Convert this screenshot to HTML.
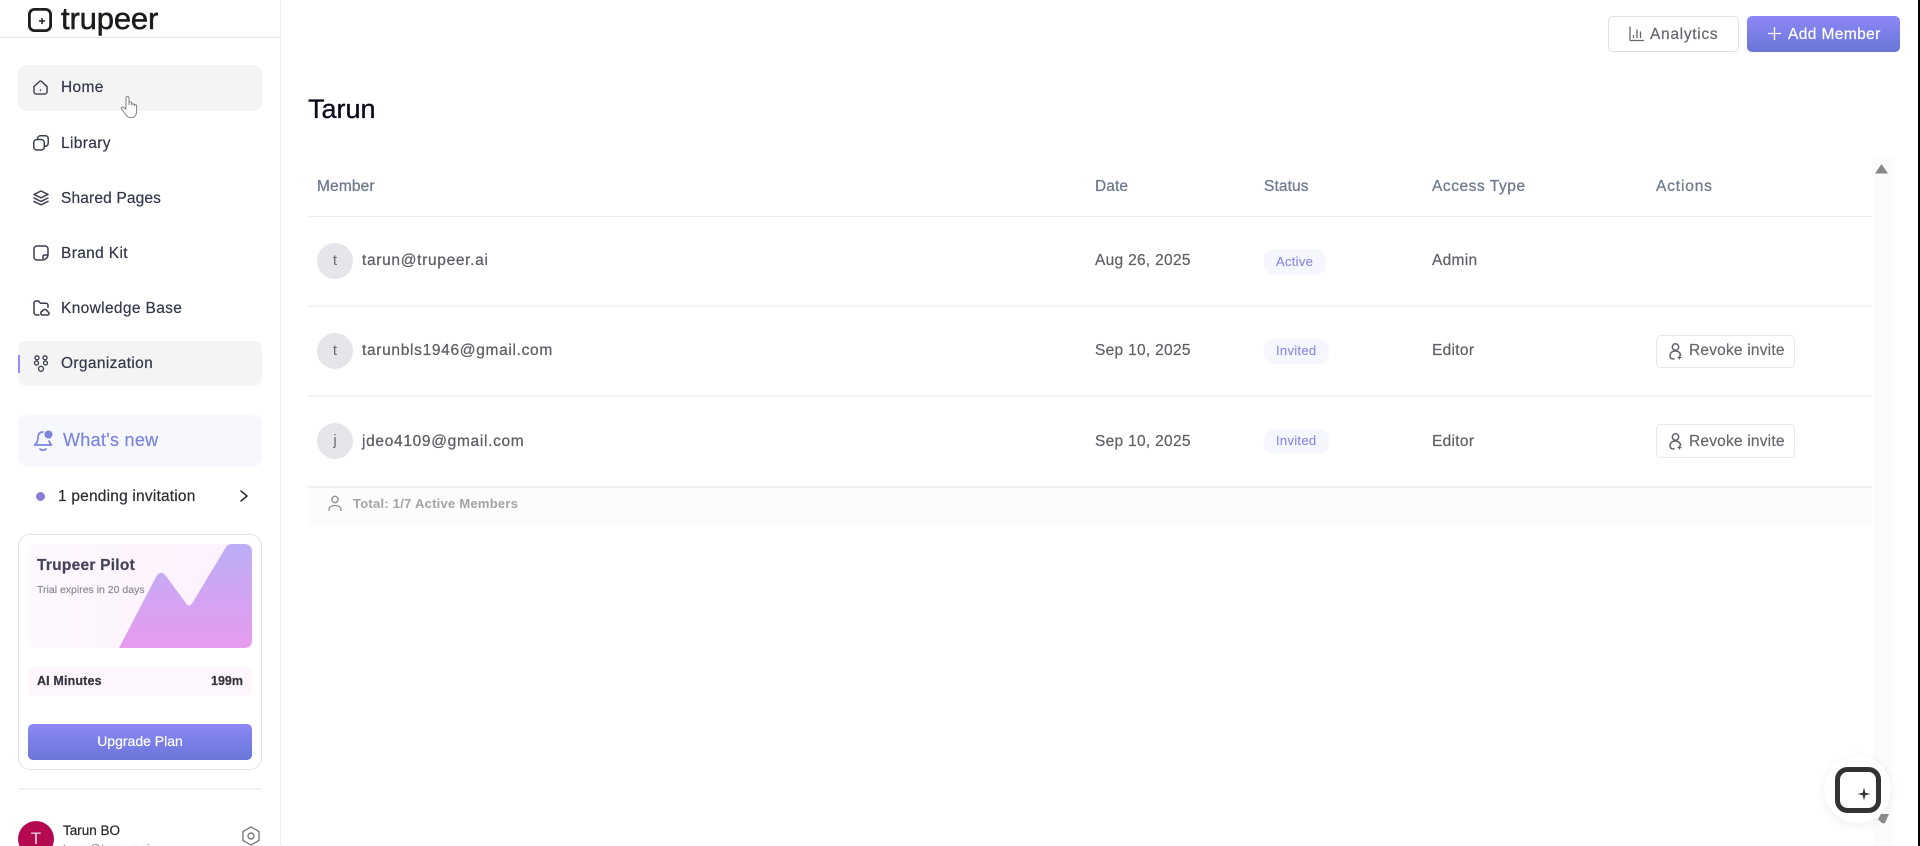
<!DOCTYPE html>
<html lang="en"><head><meta charset="utf-8"><title>Trupeer</title>
<style>
html,body{margin:0;padding:0;background:#fff;width:1920px;height:846px;overflow:hidden}
body{position:relative;font-family:"Liberation Sans",sans-serif;color:#333}
#r{position:absolute;left:0;top:0;width:1920px;height:846px;filter:blur(.35px);overflow:hidden}
.t{position:absolute;white-space:nowrap;line-height:20px;height:20px;-webkit-text-stroke:.2px}
.b{position:absolute;box-sizing:border-box}
svg{position:absolute;overflow:visible}
.nav{font-size:15.5px;color:#33384a;left:61px;letter-spacing:.35px}
.ic{fill:none;stroke:#3a3f4c;stroke-width:1.5;stroke-linecap:round;stroke-linejoin:round}
.th{font-size:15.5px;color:#6f7b8f;letter-spacing:.35px;top:177px;-webkit-text-stroke:.3px}
.td{font-size:15.5px;color:#5e5e66;letter-spacing:.3px}
.em{font-size:15.5px;color:#5e5e66;letter-spacing:.68px;left:362px;-webkit-text-stroke:.25px}
.av{background:#e6e6ea;border-radius:50%;width:36px;height:36px;left:317px;text-align:center;line-height:36px;font-size:15px;color:#6a6a70}
.badge{background:#f6f6fe;border-radius:10px;color:#8c8ce0;font-size:13px;line-height:24px;padding-left:12px;left:1264px;letter-spacing:.3px;-webkit-text-stroke:.15px}
.rev{left:1656px;width:139px;height:33px;border:1px solid #e8e8ea;border-radius:5px;background:#fff}
.line{left:308px;width:1564px;height:2px;background:#f4f4f6}
</style></head><body><div id="r">

<div class="b" style="left:280px;top:0;width:1px;height:846px;background:#ececec"></div>
<div class="b" style="left:0;top:37px;width:280px;height:1px;background:#e4e4e4"></div>

<svg style="left:28px;top:8px" width="24" height="24" viewBox="0 0 24 24"><rect x="1.4" y="1.4" width="21.2" height="21.2" rx="5" fill="none" stroke="#1e1e22" stroke-width="2.8"/><path d="M14 10v6M11 13h6" stroke="#1e1e22" stroke-width="1.5"/></svg>
<div class="t" style="left:61px;top:1px;height:36px;line-height:36px;font-size:31px;color:#1c1c20;letter-spacing:-.15px;-webkit-text-stroke:.5px">trupeer</div>

<div class="b" style="left:18px;top:65px;width:244px;height:46px;background:#f4f4f5;border-radius:8px"></div>
<div class="b" style="left:18px;top:341px;width:244px;height:45px;background:#f4f4f5;border-radius:8px"></div>
<div class="b" style="left:18px;top:355px;width:2px;height:18px;background:#9a8cf5"></div>

<svg class="ic" style="left:33px;top:80px" width="15" height="15" viewBox="0 0 16 16"><path d="M1 7 6.700 1.700a2 2 0 0 1 2.600 0L15 7v5.500a2.500 2.500 0 0 1-2.500 2.500h-9A2.500 2.500 0 0 1 1 12.500z"/><path d="M8 10.600v.3"/></svg>
<div class="t nav" style="top:78px">Home</div>
<svg class="ic" style="left:33px;top:135px" width="16" height="16" viewBox="0 0 16 16"><rect x=".8" y="4.500" width="10.500" height="10.500" rx="3"/><path d="M4.600 4.400V3.600A2.800 2.800 0 0 1 7.400.8h5a2.800 2.800 0 0 1 2.800 2.800v4.600a3 3 0 0 1-3.800 2.900"/></svg>
<div class="t nav" style="top:134px">Library</div>
<svg class="ic" style="left:33px;top:190px" width="16" height="16" viewBox="0 0 16 16"><path d="M8 1l7 3.400-7 3.400-7-3.400zM1 8l7 3.400L15 8M1 11.400l7 3.400 7-3.400"/></svg>
<div class="t nav" style="top:189px;letter-spacing:.15px">Shared Pages</div>
<svg class="ic" style="left:33px;top:245px" width="16" height="16" viewBox="0 0 16 16"><path d="M8.500 15H4a3 3 0 0 1-3-3V4a3 3 0 0 1 3-3h8a3 3 0 0 1 3 3v5"/><path d="M10 15c2-.3 4.600-2 5-5h-3.500a1.500 1.500 0 0 0-1.500 1.500z"/></svg>
<div class="t nav" style="top:244px">Brand Kit</div>
<svg class="ic" style="left:33px;top:300px" width="16" height="16" viewBox="0 0 16 16"><path d="M6 15H3.500A2.500 2.500 0 0 1 1 12.500V3a2 2 0 0 1 2-2h2.500l2 2.200H13a2 2 0 0 1 2 2v2"/><path d="M9 15a2 2 0 0 1 .4-3.800 2.600 2.600 0 0 1 5 .4 1.800 1.800 0 0 1 .6 3.400z"/></svg>
<div class="t nav" style="top:299px">Knowledge Base</div>
<svg class="ic" style="left:33px;top:355px;stroke-width:1.3" width="16" height="17" viewBox="0 0 16 17"><circle cx="4" cy="2.800" r="2"/><circle cx="12" cy="2.800" r="2"/><circle cx="8" cy="13.800" r="2.500"/><circle cx="3.500" cy="8" r="2"/><circle cx="12.500" cy="8" r="2"/></svg>
<div class="t nav" style="top:354px">Organization</div>

<div class="b" style="left:18px;top:414px;width:244px;height:53px;background:#f7f7fe;border-radius:10px"></div>
<svg style="left:33px;top:429px" width="22" height="24" viewBox="0 0 22 24"><path d="M10 3C6 3 5 6 5 9c0 3-1.500 5.500-3.500 7h17c-1-1-2-2.200-2.500-4M7 20c1 1.500 5 1.500 6 0" fill="none" stroke="#7b85dc" stroke-width="1.700" stroke-linecap="round" stroke-linejoin="round"/><circle cx="15.500" cy="5.500" r="4" fill="#7b85dc"/></svg>
<div class="t" style="left:63px;top:430px;font-size:18px;color:#7b85dc;letter-spacing:.3px">What's new</div>

<div class="b" style="left:36px;top:492px;width:9px;height:9px;border-radius:50%;background:#8a7dd8"></div>
<div class="t" style="left:58px;top:487px;font-size:15.5px;color:#2c2c34;letter-spacing:.2px">1 pending invitation</div>
<svg style="left:239px;top:489px" width="10" height="14" viewBox="0 0 10 14"><path d="M2 2l6 5-6 5" fill="none" stroke="#333" stroke-width="1.600" stroke-linecap="round" stroke-linejoin="round"/></svg>

<div class="b" style="left:18px;top:534px;width:244px;height:236px;border:1px solid #e4e4e6;border-radius:12px;background:#fff"></div>
<div class="b" style="left:28px;top:544px;width:224px;height:104px;border-radius:8px;background:linear-gradient(90deg,#fdf8fe,#fdf0fd)"></div>
<svg style="left:28px;top:544px" width="224" height="104" viewBox="0 0 224 104"><defs><linearGradient id="mg" x1="0" y1="0" x2="0" y2="1"><stop offset="0" stop-color="#bcaef6"/><stop offset="1" stop-color="#e69bee"/></linearGradient></defs><path d="M91 104L128 33Q132.500 25 138 32L157 58Q161 65 165 58L198 3Q200 0 204 0H216Q224 0 224 8V96Q224 104 216 104Z" fill="url(#mg)"/></svg>
<div class="t" style="left:37px;top:555px;top:556px;font-size:15.5px;font-weight:bold;color:#45435a;letter-spacing:.25px">Trupeer Pilot</div>
<div class="t" style="left:37px;top:580px;font-size:10.5px;color:#8e8c9c;letter-spacing:0">Trial expires in 20 days</div>
<div class="b" style="left:28px;top:667px;width:224px;height:29px;border-radius:6px;background:#fdf6fd"></div>
<div class="t" style="left:37px;top:671px;font-size:12.500px;font-weight:bold;color:#34343f;letter-spacing:.15px">AI Minutes</div>
<div class="t" style="left:211px;top:671px;font-size:12.500px;font-weight:bold;color:#34343f">199m</div>
<div class="b" style="left:28px;top:724px;width:224px;height:36px;border-radius:5px;background:linear-gradient(180deg,#8c87f6,#6976d8)"></div>
<div class="t" style="left:28px;width:224px;text-align:center;top:731px;font-size:14px;color:#fff;letter-spacing:0">Upgrade Plan</div>

<div class="b" style="left:18px;top:788px;width:244px;height:2px;background:#f3f3f3"></div>
<div class="b" style="left:18px;top:821px;width:36px;height:36px;border-radius:50%;background:#b30a52;color:#f6d5e2;text-align:center;line-height:36px;font-size:17px">T</div>
<div class="t" style="left:63px;top:821px;font-size:13.500px;color:#25252c">Tarun BO</div>
<div class="t" style="left:63px;top:839px;font-size:11px;color:#8a8a92;letter-spacing:.3px">tarun@trupeer.ai</div>
<svg style="left:241px;top:826px" width="20" height="20" viewBox="0 0 20 20"><path d="M10 1l8 4.500v9L10 19l-8-4.500v-9z" fill="none" stroke="#7c7c82" stroke-width="1.400" stroke-linejoin="round"/><circle cx="10" cy="10" r="3" fill="none" stroke="#7c7c82" stroke-width="1.400"/></svg>

<svg style="left:120px;top:95px" width="18" height="24" viewBox="0 0 18 24"><path d="M6 14V3a1.500 1.500 0 0 1 3 0v7l0-2a1.300 1.300 0 0 1 2.600 0v2a1.300 1.300 0 0 1 2.600 0v1a1.200 1.200 0 0 1 2.400 0v5c0 4-2 6.500-5.500 6.500-3 0-4.500-1-6-4L1.500 14c-.7-1.500 1.200-2.500 2.300-1.300z" fill="#fff" stroke="#808086" stroke-width="1"/></svg>

<div class="b" style="left:1608px;top:16px;width:131px;height:36px;border:1px solid #e2e2e5;border-radius:5px;background:#fff"></div>
<svg style="left:1629px;top:27px" width="15" height="15" viewBox="0 0 15 15"><path d="M1 0v12.500a1 1 0 0 0 1 1h12.500M4.500 8.500v2M8 3v7.500M11.500 5v5.500" fill="none" stroke="#66666c" stroke-width="1.300" stroke-linecap="round"/></svg>
<div class="t" style="left:1650px;top:25px;font-size:15.5px;color:#66666e;letter-spacing:.7px">Analytics</div>
<div class="b" style="left:1747px;top:16px;width:153px;height:36px;border-radius:5px;background:linear-gradient(180deg,#8c87f6,#6976d8)"></div>
<svg style="left:1768px;top:27px" width="13" height="13" viewBox="0 0 13 13"><path d="M6.500 0v13M0 6.500h13" stroke="#fff" stroke-width="1.300"/></svg>
<div class="t" style="left:1788px;top:25px;font-size:15.5px;color:#fff;letter-spacing:.4px">Add Member</div>

<div class="t" style="left:308px;top:94px;height:30px;line-height:30px;font-size:27px;color:#0b0b1c;-webkit-text-stroke:.3px">Tarun</div>

<div class="t th" style="left:317px;letter-spacing:.15px">Member</div>
<div class="t th" style="left:1095px;letter-spacing:.1px">Date</div>
<div class="t th" style="left:1264px;letter-spacing:.1px">Status</div>
<div class="t th" style="left:1432px;letter-spacing:.55px">Access Type</div>
<div class="t th" style="left:1656px;letter-spacing:.85px">Actions</div>
<div class="b line" style="top:216px;background:#ececee;height:1px"></div>

<div class="b av" style="top:243px">t</div>
<div class="t em" style="top:251px">tarun@trupeer.ai</div>
<div class="t td" style="left:1095px;top:251px">Aug 26, 2025</div>
<div class="b badge" style="top:249px;width:62px;height:26px;line-height:26px">Active</div>
<div class="t td" style="left:1432px;top:251px">Admin</div>
<div class="b line" style="top:305px"></div>

<div class="b av" style="top:333px">t</div>
<div class="t em" style="top:341px">tarunbls1946@gmail.com</div>
<div class="t td" style="left:1095px;top:341px">Sep 10, 2025</div>
<div class="b badge" style="top:339px;width:65px;height:25px">Invited</div>
<div class="t td" style="left:1432px;top:341px">Editor</div>
<div class="b rev" style="top:335px"></div>
<svg style="left:1669px;top:343px" width="13" height="17" viewBox="0 0 13 17"><circle cx="6.500" cy="4" r="3.200" fill="none" stroke="#62626a" stroke-width="1.500"/><path d="M6.500 8C3 8 1 10 1 13c0 2 1.500 3 4 3M6.500 8c3 0 5 2 5 4.500" fill="none" stroke="#62626a" stroke-width="1.500" stroke-linecap="round"/><path d="M8.500 14.500h4M10.500 12.500v4" stroke="#62626a" stroke-width="1.200"/></svg>
<div class="t" style="left:1689px;top:341px;font-size:15.5px;color:#67676e;letter-spacing:.2px">Revoke invite</div>
<div class="b line" style="top:395px"></div>

<div class="b av" style="top:423px">j</div>
<div class="t em" style="top:432px">jdeo4109@gmail.com</div>
<div class="t td" style="left:1095px;top:432px">Sep 10, 2025</div>
<div class="b badge" style="top:429px;width:65px;height:25px">Invited</div>
<div class="t td" style="left:1432px;top:432px">Editor</div>
<div class="b rev" style="top:424px;height:34px"></div>
<svg style="left:1669px;top:433px" width="13" height="17" viewBox="0 0 13 17"><circle cx="6.500" cy="4" r="3.200" fill="none" stroke="#62626a" stroke-width="1.500"/><path d="M6.500 8C3 8 1 10 1 13c0 2 1.500 3 4 3M6.500 8c3 0 5 2 5 4.500" fill="none" stroke="#62626a" stroke-width="1.500" stroke-linecap="round"/><path d="M8.500 14.500h4M10.500 12.500v4" stroke="#62626a" stroke-width="1.200"/></svg>
<div class="t" style="left:1689px;top:432px;font-size:15.5px;color:#67676e;letter-spacing:.2px">Revoke invite</div>
<div class="b line" style="top:486px;background:#efeff1"></div>

<div class="b" style="left:308px;top:488px;width:1564px;height:38px;background:#fcfcfc"></div>
<svg style="left:328px;top:495px" width="14" height="17" viewBox="0 0 14 17"><circle cx="7" cy="4.500" r="3.200" fill="none" stroke="#8e8e94" stroke-width="1.300"/><path d="M1 16v-1c0-3 2.500-4.500 6-4.500s6 1.500 6 4.500v1" fill="none" stroke="#8e8e94" stroke-width="1.300"/></svg>
<div class="t" style="left:353px;top:494px;font-size:13px;font-weight:bold;color:#a3a3a8;letter-spacing:.25px;-webkit-text-stroke:0">Total: 1/7 Active Members</div>

<div class="b" style="left:1873px;top:157px;width:19px;height:689px;background:#fbfbfb"></div>
<svg style="left:1875px;top:164px" width="13" height="10" viewBox="0 0 13 10"><path d="M6.500 0 13 9.500H0z" fill="#888"/></svg>
<div class="b" style="left:1824px;top:756px;width:67px;height:67px;border-radius:50%;background:#fff;box-shadow:0 2px 10px rgba(0,0,0,.07)"></div>
<svg style="left:1835px;top:767px" width="46" height="46" viewBox="0 0 46 46"><rect x="2.500" y="2.500" width="41" height="41" rx="10" fill="none" stroke="#333" stroke-width="5"/><path d="M29 20.500l1.300 5.200 5.200 1.300-5.200 1.300L29 33.500l-1.300-5.200-5.200-1.300 5.200-1.300z" fill="#333"/></svg>
<svg style="left:1877px;top:813px" width="12" height="11" viewBox="0 0 12 11"><path d="M4 1h8L8 10q-2 1-3 0L1 6.500z" fill="#8a8a8a"/></svg>

</div>
<div style="position:absolute;left:1918px;top:0;width:2px;height:846px;background:#000"></div>
</body></html>
